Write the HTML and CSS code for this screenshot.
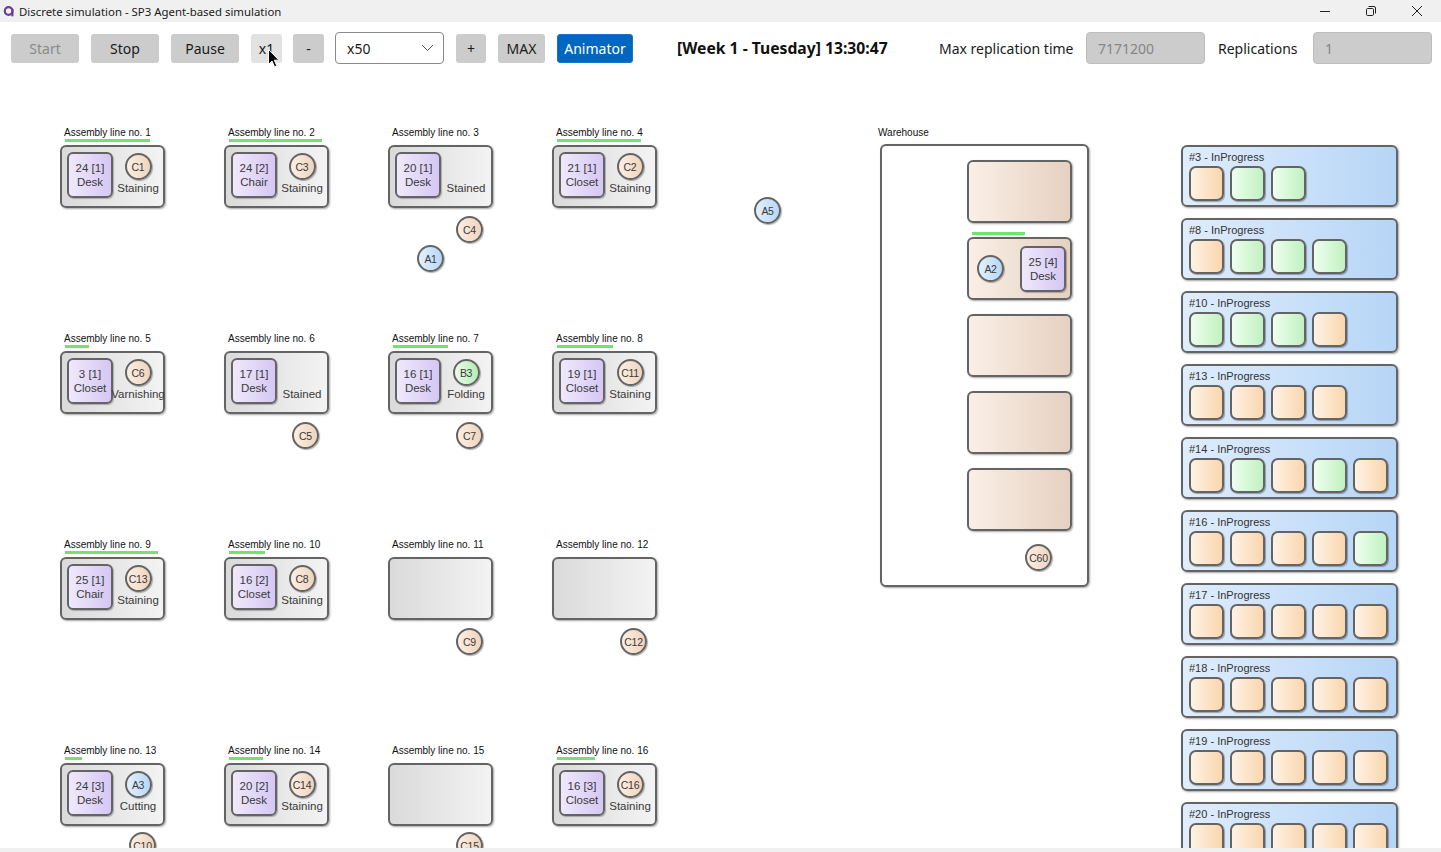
FILE: index.html
```html
<!DOCTYPE html>
<html>
<head>
<meta charset="utf-8">
<title>Discrete simulation - SP3 Agent-based simulation</title>
<link rel="stylesheet" href="styles.css">
</head>
<body>
<div class="app">
  <header class="titlebar">
    <div class="title">
      <svg class="app-icon" viewBox="0 0 12 12"><circle cx="5.6" cy="6" r="3.8" fill="none" stroke="#6a3d9a" stroke-width="2.2"/><path d="M9.4 4.5 V10.4" stroke="#6a3d9a" stroke-width="2.2" stroke-linecap="round"/></svg>
      <span>Discrete simulation - SP3 Agent-based simulation</span>
    </div>
    <div class="win-controls">
      <div class="win-btn"><svg width="12" height="12" viewBox="0 0 12 12"><path d="M1 6.5 H11" stroke="#222" stroke-width="1"/></svg></div>
      <div class="win-btn"><svg width="12" height="12" viewBox="0 0 12 12"><rect x="1.5" y="3.5" width="7" height="7" rx="1.2" fill="none" stroke="#222" stroke-width="1"/><path d="M3.5 1.5 H9 Q10.5 1.5 10.5 3 V8.5" fill="none" stroke="#222" stroke-width="1"/></svg></div>
      <div class="win-btn"><svg width="12" height="12" viewBox="0 0 12 12"><path d="M1 1 L11 11 M11 1 L1 11" stroke="#222" stroke-width="1"/></svg></div>
    </div>
  </header>

  <nav class="toolbar">
    <button class="btn btn-wide is-disabled">Start</button>
    <button class="btn btn-wide gap12">Stop</button>
    <button class="btn btn-wide gap12">Pause</button>
    <button class="btn btn-small gap12 is-hover">x1</button>
    <button class="btn btn-small gap11">-</button>
    <div class="combo gap11"><span>x50</span><svg width="13" height="8" viewBox="0 0 13 8"><path d="M1 1 L6.5 6.5 L12 1" fill="none" stroke="#555" stroke-width="1"/></svg></div>
    <button class="btn btn-plus gap12">+</button>
    <button class="btn btn-max gap12">MAX</button>
    <button class="btn btn-primary gap12">Animator</button>
    <div class="clock">[Week 1 - Tuesday] 13:30:47</div>
    <label class="field-label lbl-time">Max replication time</label>
    <div class="field">7171200</div>
    <label class="field-label lbl-rep">Replications</label>
    <div class="field">1</div>
  </nav>

  <main class="canvas">
    <section class="lines">
      <div class="line">
        <div class="line-label">Assembly line no. 1</div>
        <div class="progress" style="width:85px"></div>
        <div class="line-box">
          <div class="product"><span>24 [1]</span><span>Desk</span></div>
          <div class="stage"><div class="agent agent-c">C1</div><div class="status">Staining</div></div>
        </div>
      </div>
      <div class="line">
        <div class="line-label">Assembly line no. 2</div>
        <div class="progress" style="width:93px"></div>
        <div class="line-box">
          <div class="product"><span>24 [2]</span><span>Chair</span></div>
          <div class="stage"><div class="agent agent-c">C3</div><div class="status">Staining</div></div>
        </div>
      </div>
      <div class="line">
        <div class="line-label">Assembly line no. 3</div>
        <div class="progress" style="width:0px"></div>
        <div class="line-box">
          <div class="product"><span>20 [1]</span><span>Desk</span></div>
          <div class="stage"><div class="agent agent-none"></div><div class="status">Stained</div></div>
        </div>
      </div>
      <div class="line">
        <div class="line-label">Assembly line no. 4</div>
        <div class="progress" style="width:84px"></div>
        <div class="line-box">
          <div class="product"><span>21 [1]</span><span>Closet</span></div>
          <div class="stage"><div class="agent agent-c">C2</div><div class="status">Staining</div></div>
        </div>
      </div>

      <div class="line">
        <div class="line-label">Assembly line no. 5</div>
        <div class="progress" style="width:24px"></div>
        <div class="line-box">
          <div class="product"><span>3 [1]</span><span>Closet</span></div>
          <div class="stage"><div class="agent agent-c">C6</div><div class="status">Varnishing</div></div>
        </div>
      </div>
      <div class="line">
        <div class="line-label">Assembly line no. 6</div>
        <div class="progress" style="width:0px"></div>
        <div class="line-box">
          <div class="product"><span>17 [1]</span><span>Desk</span></div>
          <div class="stage"><div class="agent agent-none"></div><div class="status">Stained</div></div>
        </div>
      </div>
      <div class="line">
        <div class="line-label">Assembly line no. 7</div>
        <div class="progress" style="width:55px"></div>
        <div class="line-box">
          <div class="product"><span>16 [1]</span><span>Desk</span></div>
          <div class="stage"><div class="agent agent-b">B3</div><div class="status">Folding</div></div>
        </div>
      </div>
      <div class="line">
        <div class="line-label">Assembly line no. 8</div>
        <div class="progress" style="width:56px"></div>
        <div class="line-box">
          <div class="product"><span>19 [1]</span><span>Closet</span></div>
          <div class="stage"><div class="agent agent-c">C11</div><div class="status">Staining</div></div>
        </div>
      </div>

      <div class="line">
        <div class="line-label">Assembly line no. 9</div>
        <div class="progress" style="width:93px"></div>
        <div class="line-box">
          <div class="product"><span>25 [1]</span><span>Chair</span></div>
          <div class="stage"><div class="agent agent-c">C13</div><div class="status">Staining</div></div>
        </div>
      </div>
      <div class="line">
        <div class="line-label">Assembly line no. 10</div>
        <div class="progress" style="width:36px"></div>
        <div class="line-box">
          <div class="product"><span>16 [2]</span><span>Closet</span></div>
          <div class="stage"><div class="agent agent-c">C8</div><div class="status">Staining</div></div>
        </div>
      </div>
      <div class="line">
        <div class="line-label">Assembly line no. 11</div>
        <div class="progress" style="width:0px"></div>
        <div class="line-box"></div>
      </div>
      <div class="line">
        <div class="line-label">Assembly line no. 12</div>
        <div class="progress" style="width:0px"></div>
        <div class="line-box"></div>
      </div>

      <div class="line">
        <div class="line-label">Assembly line no. 13</div>
        <div class="progress" style="width:17px"></div>
        <div class="line-box">
          <div class="product"><span>24 [3]</span><span>Desk</span></div>
          <div class="stage"><div class="agent agent-a">A3</div><div class="status">Cutting</div></div>
        </div>
      </div>
      <div class="line">
        <div class="line-label">Assembly line no. 14</div>
        <div class="progress" style="width:34px"></div>
        <div class="line-box">
          <div class="product"><span>20 [2]</span><span>Desk</span></div>
          <div class="stage"><div class="agent agent-c">C14</div><div class="status">Staining</div></div>
        </div>
      </div>
      <div class="line">
        <div class="line-label">Assembly line no. 15</div>
        <div class="progress" style="width:0px"></div>
        <div class="line-box"></div>
      </div>
      <div class="line">
        <div class="line-label">Assembly line no. 16</div>
        <div class="progress" style="width:38px"></div>
        <div class="line-box">
          <div class="product"><span>16 [3]</span><span>Closet</span></div>
          <div class="stage"><div class="agent agent-c">C16</div><div class="status">Staining</div></div>
        </div>
      </div>
    </section>

    <section class="warehouse">
      <div class="wh-label">Warehouse</div>
      <div class="wh-box">
        <div class="slot-wrap"><div class="progress" style="width:0px"></div><div class="slot"></div></div>
        <div class="slot-wrap"><div class="progress" style="width:53px"></div>
          <div class="slot slot-filled">
            <div class="agent agent-a">A2</div>
            <div class="product"><span>25 [4]</span><span>Desk</span></div>
          </div>
        </div>
        <div class="slot-wrap"><div class="progress" style="width:0px"></div><div class="slot"></div></div>
        <div class="slot-wrap"><div class="progress" style="width:0px"></div><div class="slot"></div></div>
        <div class="slot-wrap"><div class="progress" style="width:0px"></div><div class="slot"></div></div>
        <div class="agent agent-c wh-agent">C60</div>
      </div>
    </section>

    <section class="orders">
      <div class="order"><div class="order-title">#3 - InProgress</div><div class="items"><i class="item p"></i><i class="item g"></i><i class="item g"></i></div></div>
      <div class="order"><div class="order-title">#8 - InProgress</div><div class="items"><i class="item p"></i><i class="item g"></i><i class="item g"></i><i class="item g"></i></div></div>
      <div class="order"><div class="order-title">#10 - InProgress</div><div class="items"><i class="item g"></i><i class="item g"></i><i class="item g"></i><i class="item p"></i></div></div>
      <div class="order"><div class="order-title">#13 - InProgress</div><div class="items"><i class="item p"></i><i class="item p"></i><i class="item p"></i><i class="item p"></i></div></div>
      <div class="order"><div class="order-title">#14 - InProgress</div><div class="items"><i class="item p"></i><i class="item g"></i><i class="item p"></i><i class="item g"></i><i class="item p"></i></div></div>
      <div class="order"><div class="order-title">#16 - InProgress</div><div class="items"><i class="item p"></i><i class="item p"></i><i class="item p"></i><i class="item p"></i><i class="item g"></i></div></div>
      <div class="order"><div class="order-title">#17 - InProgress</div><div class="items"><i class="item p"></i><i class="item p"></i><i class="item p"></i><i class="item p"></i><i class="item p"></i></div></div>
      <div class="order"><div class="order-title">#18 - InProgress</div><div class="items"><i class="item p"></i><i class="item p"></i><i class="item p"></i><i class="item p"></i><i class="item p"></i></div></div>
      <div class="order"><div class="order-title">#19 - InProgress</div><div class="items"><i class="item p"></i><i class="item p"></i><i class="item p"></i><i class="item p"></i><i class="item p"></i></div></div>
      <div class="order"><div class="order-title">#20 - InProgress</div><div class="items"><i class="item p"></i><i class="item p"></i><i class="item p"></i><i class="item p"></i><i class="item p"></i></div></div>
    </section>

    <div class="agent agent-c free" style="left:456px;top:216px">C4</div>
    <div class="agent agent-a free" style="left:417px;top:245px">A1</div>
    <div class="agent agent-a free" style="left:754px;top:197px">A5</div>
    <div class="agent agent-c free" style="left:292px;top:422px">C5</div>
    <div class="agent agent-c free" style="left:456px;top:422px">C7</div>
    <div class="agent agent-c free" style="left:456px;top:628px">C9</div>
    <div class="agent agent-c free" style="left:620px;top:628px">C12</div>
    <div class="agent agent-c free" style="left:129px;top:832px">C10</div>
    <div class="agent agent-c free" style="left:456px;top:832px">C15</div>
  </main>
  <div class="bottom-edge"></div>

  <svg class="cursor" width="12" height="19" viewBox="0 0 12 19"><path d="M0.5 0.5 L0.5 15.5 L4 12 L6.5 17.8 L8.8 16.8 L6.3 11.2 L11 11.2 Z" fill="#000" stroke="#fff" stroke-width="1"/></svg>
</div>
</body>
</html>
```
FILE: styles.css
```css
* { box-sizing: border-box; }
html, body { margin: 0; padding: 0; }
body {
  width: 1441px;
  height: 852px;
  overflow: hidden;
  background: #ffffff;
  font-family: "Noto Sans", "Open Sans", sans-serif;
  color: #1a1a1a;
}
.app {
  position: relative;
  width: 1441px;
  height: 852px;
  overflow: hidden;
}

/* title bar */
.titlebar {
  height: 22px;
  background: #f0f0f0;
  display: flex;
  align-items: center;
  justify-content: space-between;
  padding-right: 1px;
}
.title {
  display: flex;
  align-items: center;
  padding-left: 3px;
  font-size: 11.4px;
  color: #1a1a1a;
}
.app-icon { width: 12px; height: 12px; margin-right: 4px; }
.win-controls { display: flex; }
.win-btn {
  width: 46px;
  height: 22px;
  display: flex;
  align-items: center;
  justify-content: center;
}

/* toolbar */
.toolbar {
  height: 52px;
  display: flex;
  align-items: center;
  padding-left: 11px;
  font-size: 14px;
}
.btn {
  height: 29px;
  border: none;
  border-radius: 3px;
  background: #cccccc;
  color: #1b1b1b;
  font-family: "Noto Sans", "Open Sans", sans-serif;
  font-size: 14px;
  padding: 0;
  display: flex;
  align-items: center;
  justify-content: center;
}
.btn-wide { width: 68px; }
.btn-small { width: 31px; }
.btn-plus { width: 30px; }
.btn-max { width: 47px; }
.btn-primary { width: 76px; background: #0067c0; color: #ffffff; border: 1px solid #1a73c8; }
.is-disabled { color: #8a8a8a; }
.is-hover { background: #e2e2e2; }
.gap12 { margin-left: 12px; }
.gap11 { margin-left: 11px; }
.combo {
  width: 109px;
  height: 32px;
  border: 1px solid #8a8a8a;
  border-radius: 4px;
  background: #fff;
  display: flex;
  align-items: center;
  justify-content: space-between;
  padding: 0 9px 0 11px;
  font-size: 14px;
}
.clock {
  margin-left: 44px;
  width: 262px;
  font-weight: 700;
  font-size: 15.7px;
  color: #111;
}
.field-label { font-size: 14px; color: #1a1a1a; }
.lbl-time { width: 147px; }
.lbl-rep { width: 95px; margin-left: 13px; }
.field {
  width: 119px;
  height: 32px;
  border: 1px solid #bdbdbd;
  border-radius: 4px;
  background: #cccccc;
  color: #858585;
  font-size: 14px;
  display: flex;
  align-items: center;
  padding-left: 11px;
}

/* canvas */
.canvas {
  display: flex;
  align-items: flex-start;
  padding: 52px 0 0 60px;
  height: 774px;
  font-family: "Liberation Sans", Arial, sans-serif;
}
.lines {
  display: grid;
  grid-template-columns: repeat(4, 164px);
  grid-auto-rows: 206px;
}
.line { display: flex; flex-direction: column; align-items: flex-start; }
.line-label {
  font-size: 10px;
  line-height: 13px;
  padding-left: 4px;
  color: #111;
  white-space: nowrap;
}
.progress {
  height: 3px;
  margin-left: 5px;
  background: #72e272;
  flex: none;
}
.line-box {
  margin-top: 3px;
  width: 105px;
  height: 63px;
  border: 2px solid #646464;
  border-radius: 6px;
  background: linear-gradient(to right, #dadada, #f3f3f3);
  box-shadow: 1px 1px 2px rgba(0,0,0,0.35);
  padding: 5px;
  display: flex;
  align-items: flex-start;
}
.product {
  width: 46px;
  height: 46px;
  flex: none;
  border: 2px solid #646464;
  border-radius: 6px;
  background: linear-gradient(to right, #efe9fc, #d5c7f3);
  box-shadow: 1px 1px 1px rgba(0,0,0,0.25);
  display: flex;
  flex-direction: column;
  align-items: center;
  justify-content: center;
  font-size: 11.5px;
  line-height: 14px;
  color: #3a3a3a;
}
.stage {
  width: 50px;
  flex: none;
  display: flex;
  flex-direction: column;
  align-items: center;
}
.stage .agent { margin-top: 1px; }
.status {
  margin-top: 1px;
  font-size: 11.5px;
  line-height: 14px;
  color: #3a3a3a;
  white-space: nowrap;
}

.agent {
  width: 27px;
  height: 27px;
  flex: none;
  border-radius: 50%;
  border: 2px solid #646464;
  box-shadow: 1px 1px 1px rgba(0,0,0,0.3);
  display: flex;
  align-items: center;
  justify-content: center;
  font-size: 10.5px;
  color: #3a3a3a;
  font-family: "Liberation Sans", Arial, sans-serif;
  letter-spacing: -0.3px;
}
.agent-c { background: linear-gradient(to right, #fcefe3, #efd4bd); }
.agent-a { background: linear-gradient(to right, #e3f0fd, #b7d7f6); }
.agent-b { background: linear-gradient(to right, #ebfbea, #b3eeb3); }
.agent-none { visibility: hidden; }
.free { position: absolute; }

/* warehouse */
.warehouse { margin-left: 162px; display: flex; flex-direction: column; }
.wh-label { font-size: 10px; line-height: 13px; color: #111; margin-bottom: 5px; }
.wh-box {
  margin-left: 2px;
  width: 209px;
  height: 443px;
  border: 2px solid #646464;
  border-radius: 6px;
  background: #fff;
  box-shadow: 1px 1px 2px rgba(0,0,0,0.35);
  padding: 9px 0 0 85px;
  display: flex;
  flex-direction: column;
  gap: 9px;
}
.slot-wrap { display: flex; flex-direction: column; }
.slot-wrap .progress { margin-bottom: 2px; }
.slot {
  width: 105px;
  height: 63px;
  border: 2px solid #646464;
  border-radius: 6px;
  background: linear-gradient(to right, #faefe6, #e5d1c1);
  box-shadow: 1px 1px 2px rgba(0,0,0,0.35);
}
.slot-filled {
  display: flex;
  align-items: center;
  padding-left: 8px;
  gap: 16px;
}
.wh-agent { margin-left: 58px; margin-top: 4px; }

/* orders */
.orders {
  margin-left: 92px;
  margin-top: 19px;
  display: flex;
  flex-direction: column;
  gap: 11px;
}
.order {
  width: 217px;
  height: 62px;
  flex: none;
  border: 2px solid #646464;
  border-radius: 6px;
  background: linear-gradient(to right, #e0edfc, #b6d5f6);
  box-shadow: 1px 1px 2px rgba(0,0,0,0.35);
  padding: 3px 6px;
}
.order-title {
  font-size: 11px;
  line-height: 14px;
  color: #333;
}
.items { display: flex; gap: 6px; margin-top: 2px; }
.item {
  width: 35px;
  height: 35px;
  border: 2px solid #646464;
  border-radius: 7px;
  box-shadow: 1px 1px 1px rgba(0,0,0,0.3);
}
.item.p { background: linear-gradient(to right, #fff2e5, #f9d6ae); }
.item.g { background: linear-gradient(to right, #eefeee, #c1f1c1); }

.bottom-edge {
  position: absolute;
  left: 0;
  right: 0;
  bottom: 0;
  height: 4px;
  background: #f0f0f0;
}
.cursor { position: absolute; left: 268px; top: 49px; }
```
